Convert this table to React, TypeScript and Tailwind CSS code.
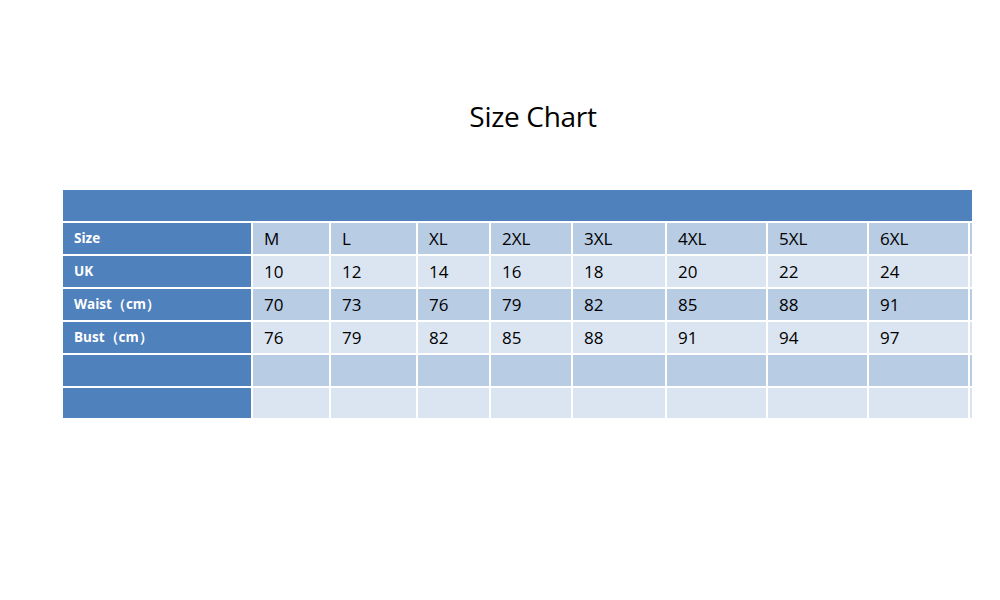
import React from 'react';

const COLS = ['M', 'L', 'XL', '2XL', '3XL', '4XL', '5XL', '6XL'];

const ROWS: { label: string; values: string[] }[] = [
    { label: 'Size', values: COLS },
    { label: 'UK', values: ['10', '12', '14', '16', '18', '20', '22', '24'] },
    { label: 'Waist（cm）', values: ['70', '73', '76', '79', '82', '85', '88', '91'] },
    { label: 'Bust（cm）', values: ['76', '79', '82', '85', '88', '91', '94', '97'] },
    { label: '', values: ['', '', '', '', '', '', '', ''] },
    { label: '', values: ['', '', '', '', '', '', '', ''] },
];

const App: React.FC = () => {
    return (
        <div className="w-[1000px] h-[600px] bg-white font-['Open_Sans',sans-serif] overflow-hidden">
            <h1 className="pt-[96px] text-center text-[28px] leading-[40px] text-black tracking-[-0.3px] pl-[66px]">
                Size Chart
            </h1>

            <div className="ml-[63px] mt-[54px] w-[909px]">
                {/* Header band */}
                <div className="h-[31px] bg-[#4f81bd]" />

                <div className="grid grid-cols-[188px_76px_85px_71px_80px_92px_99px_99px_99px_2px] gap-x-[2px] bg-white">
                    {ROWS.map((row, r) => {
                        const band = r % 2 === 0 ? 'bg-[#b8cce4]' : 'bg-[#dbe5f1]';
                        const h = r === ROWS.length - 1 ? 'h-[32px]' : 'h-[33px]';
                        return (
                            <React.Fragment key={r}>
                                <div className={`${h} border-t-2 border-white bg-[#4f81bd] flex items-center pl-[11px] text-[13.5px] font-bold text-white`}>
                                    {row.label}
                                </div>
                                {row.values.map((v, c) => (
                                    <div key={c} className={`${h} border-t-2 border-white ${band} flex items-center pl-[11px] pt-[1px] text-[17px] text-black`}>
                                        {v}
                                    </div>
                                ))}
                                <div className={`${h} border-t-2 border-white ${band}`} />
                            </React.Fragment>
                        );
                    })}
                </div>
            </div>
        </div>
    );
};

export default App;
